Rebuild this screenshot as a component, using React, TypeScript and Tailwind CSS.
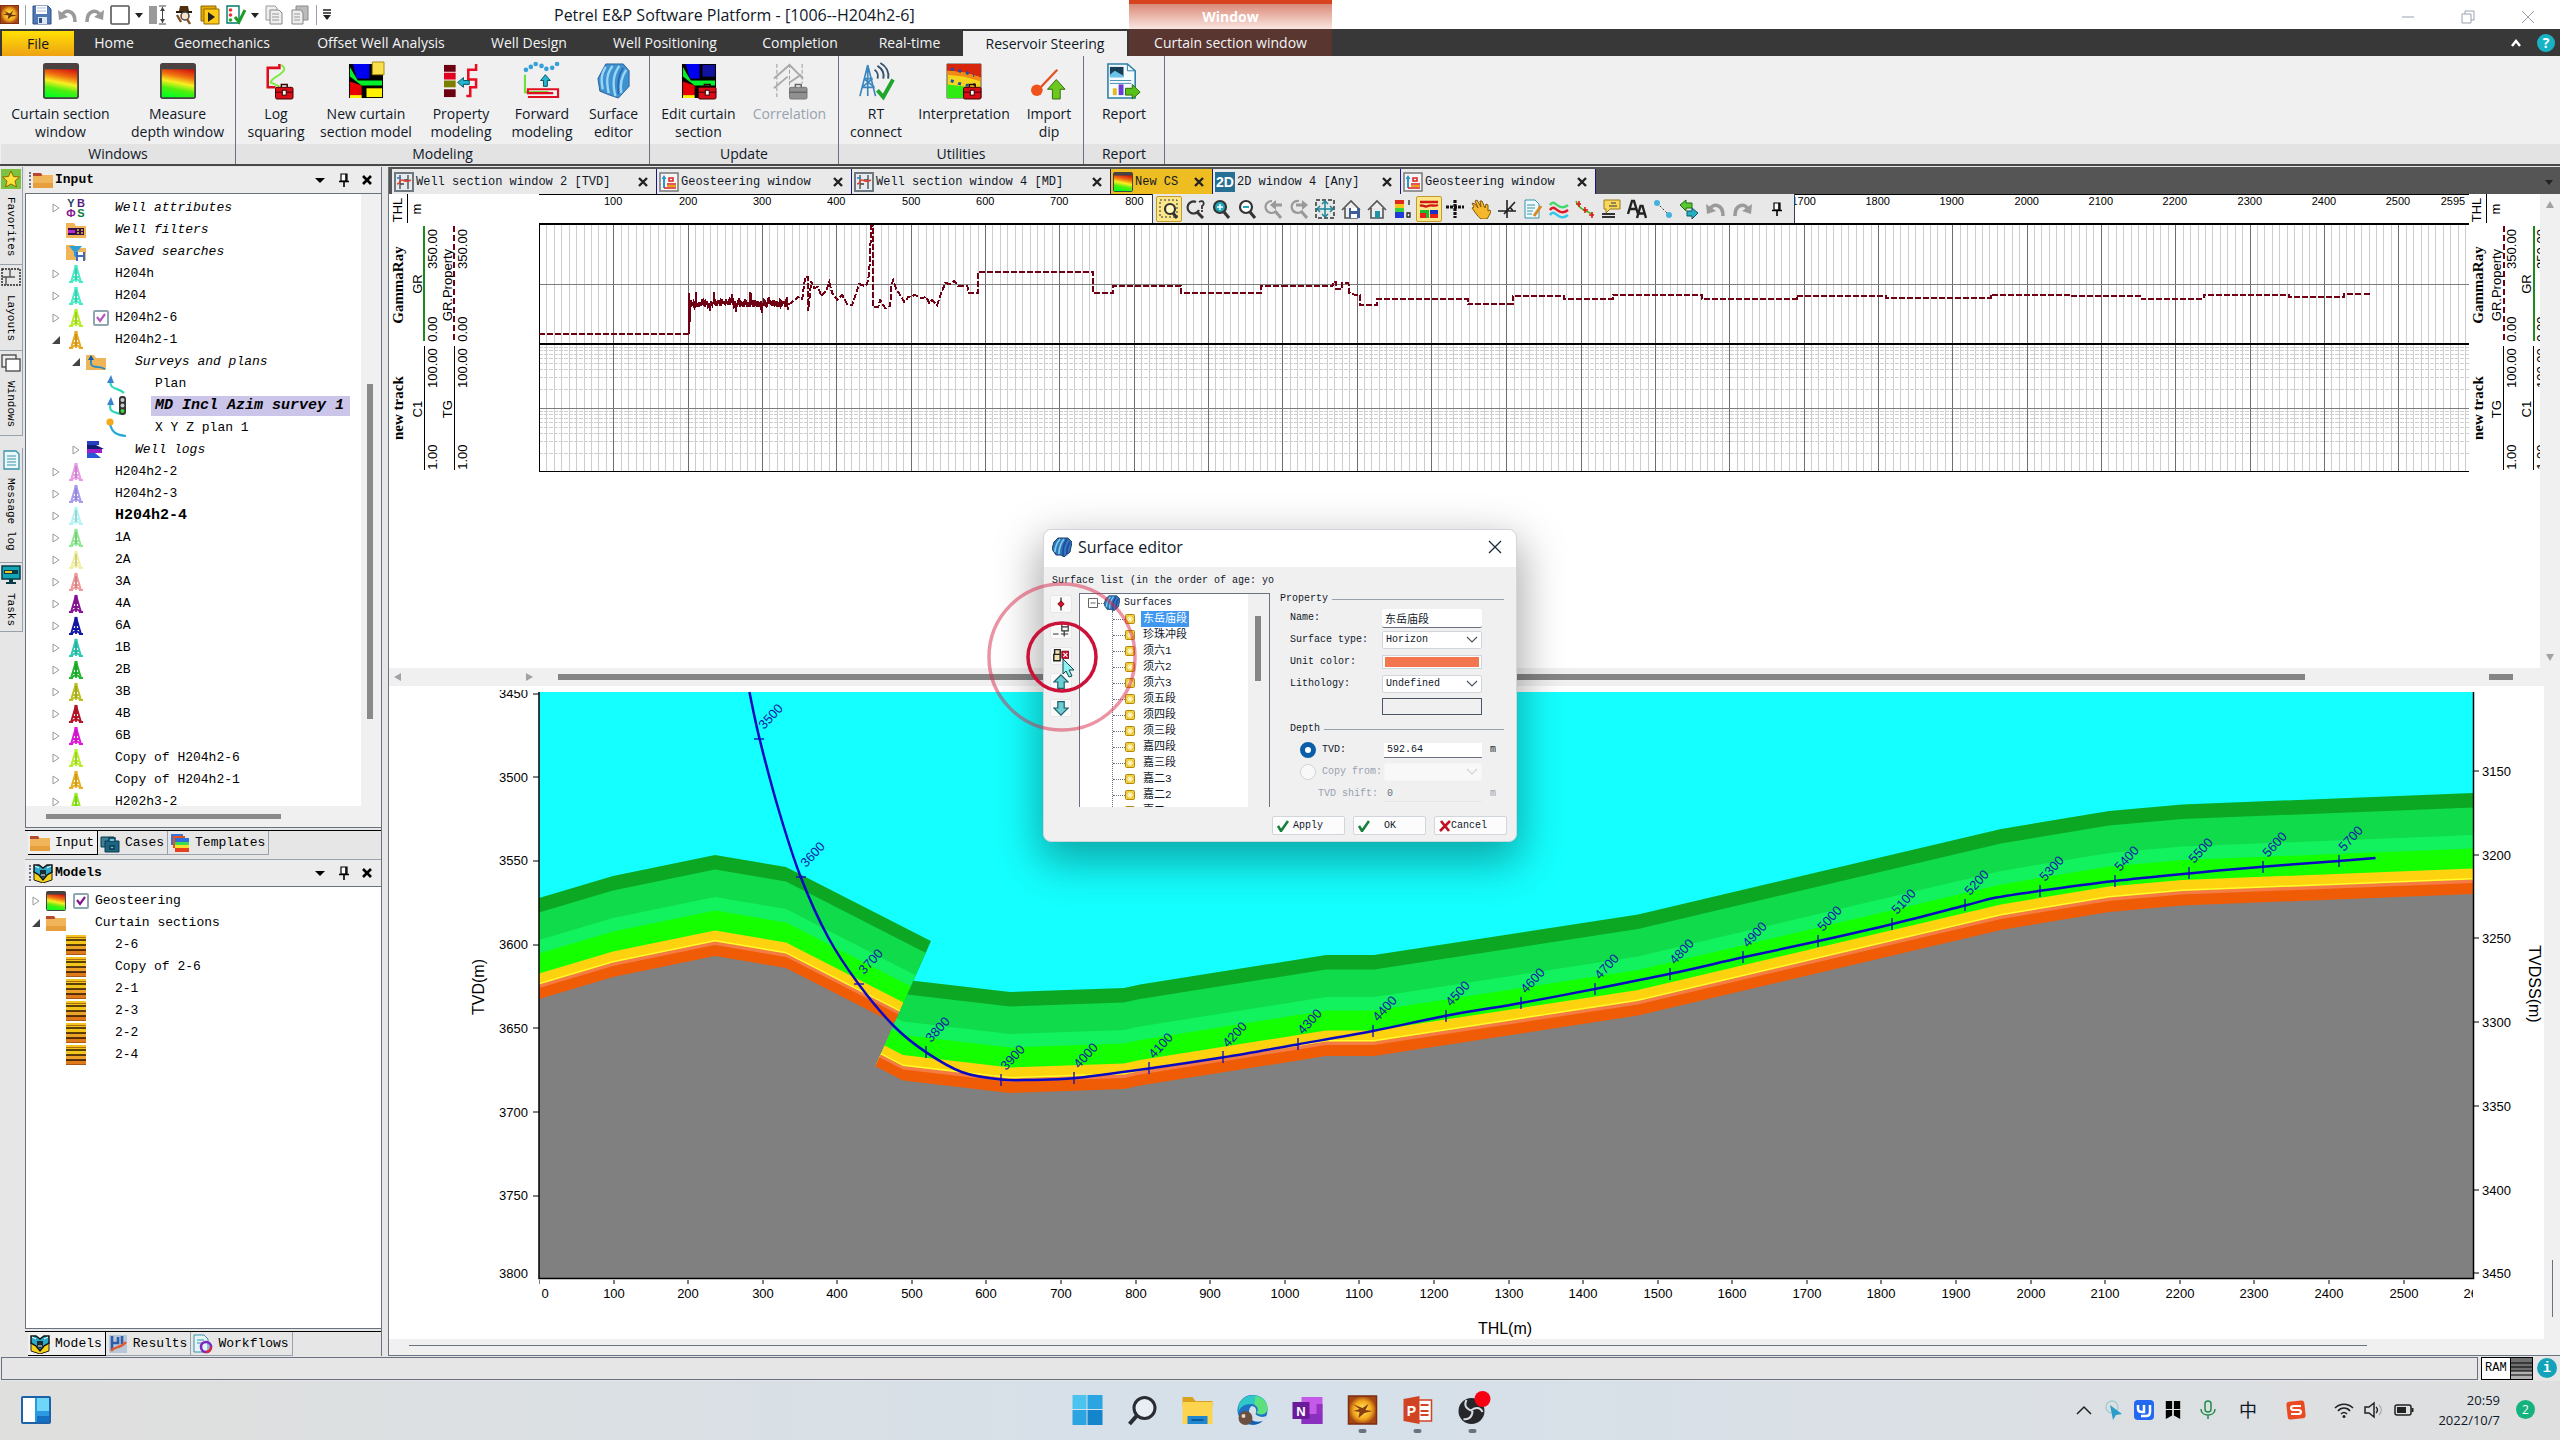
import type { ReactNode } from "react";

const MONO = "font-['Liberation_Mono','Noto_Sans_CJK_SC',monospace]";
const UI = "font-['Open_Sans','Noto_Sans_CJK_SC',sans-serif]";

type IconProps = { className?: string; children?: ReactNode; box?: string };

function Svg({ className = "size-5", box = "0 0 20 20", children }: IconProps) {
    return (
        <svg viewBox={box} className={`shrink-0 ${className}`} fill="none" aria-hidden="true">
            {children}
        </svg>
    );
}

/* ---------- shared icons ---------- */

function Undo({ flip = false, className = "size-5" }: { flip?: boolean; className?: string }) {
    return (
        <Svg className={className}>
            <g transform={flip ? "translate(20 0) scale(-1 1)" : undefined}>
                <path d="M4 11C6 4 17 4 17 17" stroke="#9a9a9a" strokeWidth="3.6" />
                <path d="M0 5l1 10 9-3z" fill="#9a9a9a" />
            </g>
        </Svg>
    );
}

function Folder({ className = "size-5" }: { className?: string }) {
    return (
        <Svg className={className}>
            <path d="M0 3h8l2 3h10v4H0z" fill="#b8472f" />
            <path d="M0 6h8l2-1h10v13H0z" fill="#f0b559" />
            <path d="M0 13h20v5H0z" fill="#e79f3e" />
        </Svg>
    );
}

function Heat({ className = "size-5", id }: { className?: string; id: string }) {
    return (
        <Svg className={className}>
            <defs>
                <linearGradient id={id} x1="0.6" y1="0" x2="0.4" y2="1">
                    <stop offset="0.1" stopColor="#d01010" />
                    <stop offset="0.35" stopColor="#f07010" />
                    <stop offset="0.55" stopColor="#f8f020" />
                    <stop offset="0.75" stopColor="#50ee10" />
                    <stop offset="1" stopColor="#00ff20" />
                </linearGradient>
            </defs>
            <rect x="0.5" y="0.5" width="19" height="19" rx="1" fill={`url(#${id})`} stroke="#444" />
            <path d="M1 1h18v2.5H1z" fill="#444" />
        </Svg>
    );
}

function Toolbox() {
    return (
        <g>
            <path d="M24 25v-3h6v3" stroke="#300" strokeWidth="1.5" />
            <rect x="18" y="25" width="18" height="12" rx="1.5" fill="#d80d17" stroke="#400" />
            <path d="M18 30h18" stroke="#400" />
            <rect x="25" y="28" width="4" height="5" fill="#fff" stroke="#300" />
        </g>
    );
}

function Gem({ className = "size-5" }: { className?: string }) {
    return (
        <Svg className={className}>
            <path d="M6 1h10l4 4-2 10-6 5-3-2H4l-4-6 2-7z" fill="#2f78b8" stroke="#1b3f6e" />
            <path d="M8 2C4 7 3 10 3 15M12 2c-4 5-5 9-5 15" stroke="#7fcdf0" strokeWidth="1.6" />
            <path d="M15 2c-4 6-4 10-4 17M18 5c-3 4-3 7-3 12" stroke="#2445a0" strokeWidth="1.6" />
        </Svg>
    );
}

function Cube({ className = "size-5" }: { className?: string }) {
    return (
        <Svg className={className}>
            <path d="M1 8l9 4 9-4v9l-9 3-9-3z" fill="#f5d21c" stroke="#222" />
            <path d="M1 2h5l4 3 4-3h5v7l-5 3-4 5-4-5-5-3z" fill="#2aa9c9" stroke="#111" strokeWidth="1.4" />
            <path d="M7 7h6v5l-3 3-3-3z" fill="#1d2b33" />
            <path d="M2 3l4 2M18 3l-4 2M8 12h4" stroke="#fff" />
        </Svg>
    );
}

function SavedFolder() {
    return (
        <Svg>
            <path d="M0 3h8l2 3h10v12H0z" fill="#f0b559" />
            <path d="M3 4h13l-5 6v6l-3-2v-4z" fill="#2b9fd6" />
            <path d="M10 10h9v9h-9z" fill="#3d6cc0" />
            <path d="M12 10h5v3h-5zM12 15h5v4h-5z" fill="#fff" />
        </Svg>
    );
}

function Derrick({ color }: { color: string }) {
    return (
        <Svg>
            <path d="M10 1L5 18M10 1l5 17M10 1v17M7 9h6M6 13h8M3 18h4M13 18h4M6.5 12l7 5M13.5 12l-7 5" stroke={color} strokeWidth="1.8" />
            <path d="M8.5 1h3v4h-3z" fill={color} />
            <path d="M10 4v12" stroke="#333" strokeWidth="0.6" opacity="0.6" />
        </Svg>
    );
}

function Layers() {
    return (
        <Svg>
            <rect width="20" height="20" fill="#f3c41c" />
            <path d="M0 10h20v5H0z" fill="#efa22a" />
            <path d="M0 15h20v5H0z" fill="#df7a1c" />
            <path d="M0 5h20M0 10h20M0 15h20" stroke="#2a1500" strokeWidth="1.4" />
            <path d="M0 2.500h20M0 19.500h20" stroke="#8d4b10" strokeWidth="0.7" />
        </Svg>
    );
}

function PetrelLogo({ className = "size-5" }: { className?: string }) {
    return (
        <Svg className={className}>
            <defs>
                <radialGradient id="petrel">
                    <stop offset="0" stopColor="#fff060" />
                    <stop offset="0.65" stopColor="#f2a61c" />
                    <stop offset="1" stopColor="#a54712" />
                </radialGradient>
            </defs>
            <rect x="0.5" y="0.5" width="19" height="19" fill="url(#petrel)" stroke="#7d2c10" />
            <path d="M4 6l6 3 4-3-2 4 6 1-6 1-4 3 1-4-6-1 4-1z" fill="#6d3208" />
        </Svg>
    );
}

function WellSection() {
    return (
        <Svg>
            <rect x="1" y="1" width="18" height="18" fill="#e6ebef" stroke="#6e7880" strokeWidth="2" />
            <path d="M6 3v14M14 3v14M6 12h4M10 8h4" stroke="#444" strokeWidth="1.3" />
            <path d="M3 12c4 0 2-4 5-4s3 3 9 0" stroke="#e04030" strokeWidth="1.6" />
            <path d="M3 6h4" stroke="#3a7ac8" strokeWidth="1.6" />
        </Svg>
    );
}

function Geosteer() {
    return (
        <Svg>
            <rect x="1" y="1" width="18" height="18" fill="#f6f6f6" stroke="#777" strokeWidth="1.5" />
            <path d="M5 16V5" stroke="#2b94cf" strokeWidth="2" />
            <path d="M2.500 7L5 3l2.500 4z" fill="#2b94cf" />
            <path d="M10 6h4v3h-4zM8 12h9M5 16h12" stroke="#d22" strokeWidth="1.5" />
            <path d="M8 14h9" stroke="#eaa21c" strokeWidth="2" />
        </Svg>
    );
}

function Dim2() {
    return (
        <span className="flex size-5 shrink-0 items-center justify-center bg-[#256f95] font-['Liberation_Sans',sans-serif] text-sm font-bold text-white">
            2D
        </span>
    );
}

function Chevron({ className = "" }: { className?: string }) {
    return (
        <Svg className={`h-2 w-3 ${className}`} box="0 0 12 8">
            <path d="M1 1l5 5 5-5" stroke="currentColor" strokeWidth="1.2" />
        </Svg>
    );
}

/* ---------- title bar ---------- */

function Divider() {
    return <span className="h-5 w-px shrink-0 bg-gray-400" />;
}

function Caret() {
    return (
        <Svg className="-mx-px h-1.5 w-2" box="0 0 8 6">
            <path d="M0 1h8L4 6z" fill="#222" />
        </Svg>
    );
}

function TitleBar() {
    return (
        <header className={`relative flex h-[29px] items-center justify-between bg-white ${UI}`}>
            <div className="flex items-center gap-1.5">
                <PetrelLogo className="size-[19px]" />
                <Divider />
                <Svg>
                    <path d="M1 1h15l3 3v15H1z" fill="#5078b4" stroke="#2f4f86" />
                    <path d="M4 1h11v8H4z" fill="#fff" />
                    <path d="M6 12h9v7H6z" fill="#dce6f2" />
                    <path d="M7 13h3v5H7z" fill="#2f4f86" />
                    <path d="M5 3h9M5 6h9" stroke="#a9bcd8" />
                </Svg>
                <Undo />
                <Undo flip />
                <Svg>
                    <rect x="1" y="1" width="18" height="18" rx="1" fill="#fff" stroke="#555" strokeWidth="1.6" />
                </Svg>
                <Caret />
                <Svg>
                    <path d="M1 1h8v18H1z" fill="#9a9a9a" />
                    <path d="M11 1h7M11 19h7M14.500 2v16" stroke="#444" />
                    <path d="M12 6l2.500-4L17 6zM12 14l2.500 4 2.500-4z" fill="#444" />
                </Svg>
                <Svg>
                    <path d="M6 1h8l1 5H5z" fill="#4f2f10" />
                    <path d="M2 6h16v2H2z" fill="#2c1b0a" />
                    <circle cx="11" cy="11" r="4" fill="#fbe6cc" stroke="#444" strokeWidth="1.5" />
                    <path d="M13 14l3 5M3 10l4 7" stroke="#7d5026" strokeWidth="2.400" />
                </Svg>
                <Svg>
                    <path d="M1 1h15v15H1z" fill="#e0a800" stroke="#8d6b00" />
                    <path d="M4 4h15v15H4z" fill="#ffca18" stroke="#8d6b00" />
                    <path d="M8 7l7 5-7 5z" fill="#222" />
                </Svg>
                <Svg>
                    <path d="M1 1h12v17H1z" fill="#fff" stroke="#00796b" strokeWidth="1.4" />
                    <circle cx="4.500" cy="5" r="1.800" fill="#e33" />
                    <circle cx="4.500" cy="10" r="1.800" fill="#e33" />
                    <circle cx="4.500" cy="15" r="1.800" fill="#2a2" />
                    <path d="M9 12l4 5 6-12" stroke="#1c9c28" strokeWidth="3" />
                </Svg>
                <Caret />
                <Svg>
                    <path d="M2 1h9l2 2v12H2z" fill="#eee" stroke="#999" />
                    <path d="M6 5h9l3 3v11H6z" fill="#eee" stroke="#888" />
                    <path d="M8 9h7M8 12h7M8 15h7" stroke="#999" />
                </Svg>
                <Svg>
                    <path d="M6 1h12v14H6z" fill="#bbb" stroke="#888" />
                    <path d="M2 5h9l2 3v11H2z" fill="#eee" stroke="#888" />
                    <path d="M4 9h6M4 12h6M4 15h6" stroke="#999" />
                </Svg>
                <Divider />
                <Svg className="h-3 w-2" box="0 0 8 12">
                    <path d="M0 1h8M0 4h8" stroke="#222" strokeWidth="1.400" />
                    <path d="M0 6h8l-4 5z" fill="#222" />
                </Svg>
            </div>
            <h1 className="absolute left-[554px] text-base text-gray-900">
                Petrel E&amp;P Software Platform - [1006--H204h2-6]
            </h1>
            <div className="absolute left-[1129px] top-0 flex h-[29px] w-[203px] items-center justify-center border-t-4 border-[#d8431f] bg-linear-to-b from-[#d98a78] to-[#f8e6e2] text-sm font-bold text-white">
                Window
            </div>
            <div className="flex items-center gap-11 pr-6 pt-1 text-gray-400">
                <button type="button" aria-label="Minimize" className="size-4">
                    <Svg className="size-4" box="0 0 16 16"><path d="M2 8h12" stroke="currentColor" /></Svg>
                </button>
                <button type="button" aria-label="Restore" className="size-4">
                    <Svg className="size-4" box="0 0 16 16">
                        <path d="M2 5h9v9H2zM5 5V2h9v9h-3" stroke="currentColor" />
                    </Svg>
                </button>
                <button type="button" aria-label="Close" className="size-4">
                    <Svg className="size-4" box="0 0 16 16"><path d="M2 2l12 12M14 2L2 14" stroke="currentColor" /></Svg>
                </button>
            </div>
        </header>
    );
}

/* ---------- ribbon ---------- */

const menuTabs = [
    { label: "Home", width: "w-20" },
    { label: "Geomechanics", width: "w-[136px]" },
    { label: "Offset Well Analysis", width: "w-[182px]" },
    { label: "Well Design", width: "w-[114px]" },
    { label: "Well Positioning", width: "w-[158px]" },
    { label: "Completion", width: "w-[112px]" },
    { label: "Real-time", width: "w-[107px]" },
];

function MenuTabs() {
    return (
        <nav className={`flex h-[27px] items-stretch bg-[#383838] text-sm text-gray-100 ${UI}`}>
            <button type="button" className="ml-0.5 mt-0.5 w-[72px] bg-linear-to-b from-[#ffe000] to-[#eda212] text-gray-900">
                File
            </button>
            {menuTabs.map((t) => (
                <button key={t.label} type="button" className={`whitespace-nowrap ${t.width}`}>
                    {t.label}
                </button>
            ))}
            <button type="button" className="mt-0.5 w-[164px] whitespace-nowrap bg-[#f0f0f0] text-gray-900">
                Reservoir Steering
            </button>
            <button type="button" className="ml-0.5 w-[203px] whitespace-nowrap bg-[#593630]">
                Curtain section window
            </button>
            <div className="ml-auto flex items-center gap-4 pr-[5px]">
                <Svg className="h-2 w-2.5" box="0 0 10 8">
                    <path d="M1 7l4-5 4 5" stroke="#fff" strokeWidth="2.500" />
                </Svg>
                <span className="flex size-[18px] items-center justify-center rounded-full bg-[#17b3c4] text-sm font-bold text-white">?</span>
            </div>
        </nav>
    );
}

const ribbonIcons: Record<string, ReactNode> = {
    log: (
        <>
            <path d="M24 2c6 4 2 7-2 10s-8 4-9 8l9 4" stroke="#7bec3c" strokeWidth="2" />
            <path d="M22 1v4H10v20h8" stroke="#dc0d1c" strokeWidth="2.600" />
            <Toolbox />
        </>
    ),
    model: (
        <>
            <path d="M1 1h35v35H1z" fill="#000" />
            <path d="M5 1h17v15H9z" fill="#0000f0" />
            <path d="M2 19l12 4v12H2z" fill="#e80000" />
            <path d="M2 4l8 14h25v5H14L2 14z" fill="#00f02c" />
            <path d="M19 26h16v9H19z" fill="#fff200" />
            <path d="M2 33h12v3H2z" fill="#fff200" />
            <path d="M25-1h12v13H25z" fill="#f8e04a" stroke="#a88a10" />
        </>
    ),
    property: (
        <>
            <path d="M1 2h12v7H1z" fill="#6d0010" />
            <path d="M1 10h12v7H1z" fill="#e0001f" />
            <path d="M1 18h12v7H1z" fill="#7d7d00" />
            <path d="M1 27h12v8H1z" fill="#6d0010" />
            <path d="M34 1v6h-8v10h8v8h-6v9h-4" stroke="#e80d20" strokeWidth="2.600" />
            <path d="M15 20l6-5v3h6v4h-6v3z" fill="#21b6cf" stroke="#0b5361" />
        </>
    ),
    forward: (
        <>
            {[2, 7, 12, 18, 23, 29, 34].map((x, i) => (
                <circle key={x} cx={x} cy={[7, 4, 1, 3, 6, 5, 1][i]} r="2.400" fill="#38a0d8" />
            ))}
            <path d="M1 12v18h24" stroke="#6ee23c" strokeWidth="2.200" />
            <path d="M4 35h31v-8H4v4h26" stroke="#e01020" strokeWidth="2.200" />
            <path d="M22 12l5 6h-3v6h-4v-6h-3z" fill="#21b6cf" stroke="#0b5361" />
        </>
    ),
    surface: (
        <>
            <path d="M10 1h18l6 7v16l-11 12-9-3-10-4-2-13z" fill="#3f92d0" stroke="#2c5e9c" />
            <path d="M10 4c-5 8-5 14-3 23M17 3c-7 9-6 17-4 28M24 3c-7 9-7 20-4 31M31 7c-6 9-6 18-5 24" stroke="#9ad7f7" strokeWidth="2.400" />
            <path d="M28 5c-6 8-6 18-5 27" stroke="#2a62a8" strokeWidth="1.500" />
        </>
    ),
    edit: (
        <>
            <path d="M1 1h35v35H1z" fill="#000" />
            <path d="M5 1h14v15H9z" fill="#0000f0" />
            <path d="M22 2h13v12H22z" fill="#1212a0" />
            <path d="M2 19l12 4v10H2z" fill="#e80000" />
            <path d="M2 4l8 14h25v5H14L2 14z" fill="#00f02c" />
            <path d="M2 33h12v3H2z" fill="#fff200" />
            <Toolbox />
        </>
    ),
    correlation: (
        <>
            <path d="M5 1v34M18 1v34M31 1v20" stroke="#999" strokeDasharray="4 2" />
            <path d="M2 16L18 2l14 14M2 26l14-12M18 20l12-8" stroke="#aaa" strokeWidth="2" />
            <rect x="18" y="25" width="18" height="12" rx="1.500" fill="#909090" stroke="#777" />
            <path d="M24 25v-3h6v3M18 30h18" stroke="#666" strokeWidth="1.500" />
        </>
    ),
    rt: (
        <>
            <path d="M10 2L2 34M10 2l8 32M10 2v32M6 16h9M4 25h13M6 16l11 9M15 16L4 25" stroke="#3a86c0" strokeWidth="1.700" />
            <path d="M17 7c3 2 4 6 3 9M20 3c5 3 7 8 6 13M23 0c7 4 9 10 8 16" stroke="#36536e" strokeWidth="2" />
            <path d="M20 28l6 7 10-18" stroke="#1ea72a" strokeWidth="4" />
        </>
    ),
    interp: (
        <>
            <path d="M1 1h35v35H1z" fill="#f2d51c" stroke="#555" />
            <path d="M1 1h35v14L20 10 1 8z" fill="#d8260d" />
            <path d="M1 8l19 2 16 5v4L18 14 1 12z" fill="#f08a14" />
            <path d="M1 22l16 2 19 4v8H1z" fill="#30ea14" />
            <path d="M5 6l8 2 8 2 8 3M5 18l8 3 8 2 9-1" stroke="#1c4fa8" strokeWidth="3" strokeDasharray="3 5" />
            <Toolbox />
        </>
    ),
    dip: (
        <>
            <path d="M27 7L8 27" stroke="#e05226" strokeWidth="2.400" />
            <circle cx="6" cy="28" r="6" fill="#f0521c" />
            <path d="M26 17l9 10h-5v10h-8V27h-5z" fill="#6cc71e" stroke="#346d0a" />
        </>
    ),
    report: (
        <>
            <path d="M2 1h20l8 7v28H2z" fill="#f4fbff" stroke="#2b7ea8" strokeWidth="1.600" />
            <path d="M22 1v7h8" stroke="#2b7ea8" />
            <path d="M4 4h14v10H4z" fill="#163e56" />
            <path d="M4 12l5-4 9 5v2H4z" fill="#6cc3ea" />
            <path d="M4 18h22M4 21h22" stroke="#4d90b0" />
            <path d="M7 26h4v7H7z" fill="#e8b820" />
            <path d="M13 22h5v11h-5z" fill="#6a3ad2" />
            <path d="M20 26h7v-4l8 8-8 7v-4h-7z" fill="#58c11a" stroke="#2d6d08" />
        </>
    ),
};

const ribbonGroups = [
    {
        title: "Windows",
        items: [
            { icon: "heat1", lines: ["Curtain section", "window"], width: "w-[119px]" },
            { icon: "heat2", lines: ["Measure", "depth window"], width: "w-[115px]" },
        ],
    },
    {
        title: "Modeling",
        items: [
            { icon: "log", lines: ["Log", "squaring"], width: "w-20" },
            { icon: "model", lines: ["New curtain", "section model"], width: "w-[100px]" },
            { icon: "property", lines: ["Property", "modeling"], width: "w-[90px]" },
            { icon: "forward", lines: ["Forward", "modeling"], width: "w-[72px]" },
            { icon: "surface", lines: ["Surface", "editor"], width: "w-[71px]" },
        ],
    },
    {
        title: "Update",
        items: [
            { icon: "edit", lines: ["Edit curtain", "section"], width: "w-[97px]" },
            { icon: "correlation", lines: ["Correlation"], width: "w-[85px]", off: true },
        ],
        pad: "pr-1.5",
    },
    {
        title: "Utilities",
        items: [
            { icon: "rt", lines: ["RT", "connect"], width: "w-[74px]" },
            { icon: "interp", lines: ["Interpretation"], width: "w-[102px]" },
            { icon: "dip", lines: ["Import", "dip"], width: "w-[68px]" },
        ],
    },
    {
        title: "Report",
        items: [{ icon: "report", lines: ["Report"], width: "w-20" }],
    },
];

function Ribbon() {
    return (
        <section className={`flex h-[110px] border-b-2 border-[#484848] bg-[#f0f0f0] pl-px text-sm text-gray-900 ${UI}`}>
            {ribbonGroups.map((g) => (
                <div key={g.title} className="flex flex-col border-r border-gray-500">
                    <div className={`flex h-[88px] pt-[5px] ${g.pad ?? ""}`}>
                        {g.items.map((b) => (
                            <button
                                key={b.icon}
                                type="button"
                                disabled={"off" in b}
                                className={`flex flex-col items-center whitespace-nowrap leading-[18px] disabled:text-gray-400 ${b.width}`}
                            >
                                {b.icon.startsWith("heat") ? (
                                    <Heat id={b.icon} className="mb-1.5 mt-0.5 size-9" />
                                ) : (
                                    <Svg className="mb-1.5 mt-0.5 size-9 overflow-visible" box="0 0 37 37">{ribbonIcons[b.icon]}</Svg>
                                )}
                                {b.lines.map((l) => (
                                    <span key={l}>{l}</span>
                                ))}
                            </button>
                        ))}
                    </div>
                    <div className="flex h-5 items-center justify-center bg-[#e3e3e3]">{g.title}</div>
                </div>
            ))}
            <div className="mt-[88px] flex-1 bg-[#e3e3e3]" />
        </section>
    );
}

/* ---------- left side ---------- */

const sideTabs = [
    { label: "Favorites", h: "h-[98px]" },
    { label: "Layouts", h: "h-[86px]" },
    { label: "Windows", h: "h-[85px]" },
    { label: "Message log", h: "mt-3 h-[115px]" },
    { label: "Tasks", h: "h-[69px]" },
];

const sideIcons: Record<string, ReactNode> = {
    Favorites: (
        <>
            <rect x="0" y="0" width="20" height="20" fill="#7ec242" />
            <path d="M10 2l2.500 5.500 6 .5-4.500 4 1.500 6L10 15l-5.500 3L6 12 1.500 8l6-.5z" fill="#ffe23c" stroke="#8d6a00" />
        </>
    ),
    Layouts: (
        <>
            <path d="M1 2h18v16H1z" stroke="#222" strokeWidth="1.400" strokeDasharray="2 1" />
            <path d="M1 10h13M9 2v8M5 10v8" stroke="#555" strokeWidth="1.400" />
        </>
    ),
    Windows: (
        <>
            <rect x="1" y="2" width="14" height="12" fill="#eee" stroke="#444" strokeWidth="1.300" />
            <rect x="5" y="6" width="14" height="12" fill="#fff" stroke="#444" strokeWidth="1.300" />
        </>
    ),
    "Message log": (
        <>
            <path d="M3 1h12l3 3v15H3z" fill="#eaf8fb" stroke="#3a93a8" strokeWidth="1.300" />
            <path d="M6 6h9M6 9h9M6 12h9M6 15h9" stroke="#3a93a8" />
        </>
    ),
    Tasks: (
        <>
            <path d="M1 1h18v13H1z" fill="#12a5b8" stroke="#083d46" strokeWidth="1.500" />
            <path d="M3 5h14v4H3z" fill="#083d46" />
            <path d="M4 6h7v2H4z" fill="#f6c321" />
            <path d="M8 14h4v3H8zM5 17h10v2H5z" fill="#083d46" />
        </>
    ),
};

function SideStrip() {
    return (
        <nav className={`flex w-[23px] shrink-0 flex-col text-[11px] ${MONO}`}>
            {sideTabs.map((t) => (
                <button
                    key={t.label}
                    type="button"
                    className={`flex flex-col items-center gap-2 border-b border-r border-gray-400 bg-[#e6e6e6] pt-0.5 ${t.h}`}
                >
                    <Svg>{sideIcons[t.label]}</Svg>
                    <span className="[writing-mode:vertical-rl]">{t.label}</span>
                </button>
            ))}
        </nav>
    );
}

function PanelHeader({ title, icon }: { title: string; icon: ReactNode }) {
    return (
        <div className="flex h-[27px] items-center border-b border-gray-500 bg-[#ececec] pl-1 pr-2">
            <span className="mr-0.5 h-4 border-l-2 border-dotted border-gray-500" />
            {icon}
            <h2 className="ml-0.5 flex-1 text-[13px] font-bold">{title}</h2>
            <button type="button" aria-label={`${title} menu`} className="mr-3">
                <Svg className="h-1.5 w-2.5" box="0 0 10 6"><path d="M0 1h10L5 6z" fill="#000" /></Svg>
            </button>
            <button type="button" aria-label={`Pin ${title}`} className="mr-2.5">
                <Pin />
            </button>
            <button type="button" aria-label={`Close ${title}`}>
                <Svg className="size-3" box="0 0 12 12"><path d="M2 2l8 8M10 2l-8 8" stroke="#000" strokeWidth="2.600" /></Svg>
            </button>
        </div>
    );
}

function Pin() {
    return (
        <Svg className="size-3.5" box="0 0 14 14">
            <path d="M4 1h6v7H4z" fill="#fff" stroke="#000" strokeWidth="1.200" />
            <path d="M9 1v7M2 8.500h10M7 9v5" stroke="#000" strokeWidth="1.600" />
        </Svg>
    );
}

function TreeCheck({ label, color = "#86168d" }: { label: string; color?: string }) {
    return (
        <span className="relative size-4">
            <input
                type="checkbox"
                defaultChecked
                aria-label={label}
                className="block size-4 appearance-none rounded-xs border-2 border-[#8fa5b0] bg-white"
            />
            <Svg className="pointer-events-none absolute inset-0 size-4" box="0 0 16 16">
                <path d="M4 7l3 4 5-7" stroke={color} strokeWidth="2.200" />
            </Svg>
        </span>
    );
}

function Expander({ state }: { state?: "open" | "closed" }) {
    return (
        <span className="flex w-5 shrink-0 justify-center">
            {state === "closed" && (
                <Svg className="h-2.5 w-2" box="0 0 8 10"><path d="M1 1l6 4-6 4z" stroke="#999" /></Svg>
            )}
            {state === "open" && (
                <Svg className="size-2" box="0 0 8 8"><path d="M8 0v8H0z" fill="#444" /></Svg>
            )}
        </span>
    );
}

type Row = {
    label: string;
    level: number;
    state?: "open" | "closed";
    well?: string;
    icon?: ReactNode;
    check?: string;
    style?: string;
};

const pad = ["", "pl-5", "pl-10", "pl-[60px]"];

const attributesIcon = (
    <span className="grid size-5 shrink-0 grid-cols-2 content-center text-center font-['Liberation_Sans',sans-serif] text-[11px] font-bold leading-[10px]">
        <span className="text-[#23405a]">Y</span>
        <span className="text-[#5a1c80]">B</span>
        <span className="text-[#86168d]">Ф</span>
        <span className="text-[#0c7a3c]">S</span>
    </span>
);

const filtersIcon = (
    <Svg>
        <path d="M0 3h8l2 3h10v12H0z" fill="#f0b559" />
        <path d="M2 8h16v7H2z" fill="#32104a" />
        <path d="M2 10h7v3H2z" fill="#b32ad0" />
        <path d="M11 10h2M15 10h2M11 13h2M15 13h2" stroke="#f6c321" strokeWidth="1.500" />
    </Svg>
);

const inputRows: Row[] = [
    { label: "Well attributes", level: 1, state: "closed", icon: attributesIcon, style: "italic" },
    { label: "Well filters", level: 1, icon: filtersIcon, style: "italic" },
    { label: "Saved searches", level: 1, icon: <SavedFolder />, style: "italic" },
    { label: "H204h", level: 1, state: "closed", well: "#46ecc6" },
    { label: "H204", level: 1, state: "closed", well: "#46ecc6" },
    { label: "H204h2-6", level: 1, state: "closed", well: "#b6ee28", check: "#b45abf" },
    { label: "H204h2-1", level: 1, state: "open", well: "#e8a820" },
    {
        label: "Surveys and plans",
        level: 2,
        state: "open",
        style: "italic",
        icon: (
            <Svg>
                <path d="M0 3h8l2 3h10v12H0z" fill="#f0b559" />
                <path d="M5 4v8c2 5 7 1 14 5" stroke="#188cc8" strokeWidth="1.800" />
                <path d="M2 8l3-5 3 5z" fill="#0f5ca8" />
            </Svg>
        ),
    },
    {
        label: "Plan",
        level: 3,
        icon: (
            <Svg>
                <path d="M5 5c-3 12 8 8 13 14" stroke="#30d8b8" strokeWidth="2.200" />
                <path d="M1 9l4-8 3 8z" fill="#3c82d0" />
            </Svg>
        ),
    },
    {
        label: "MD Incl Azim survey 1",
        level: 3,
        style: "italic font-bold bg-[#cbc5ea] pl-1 pr-1.5 -ml-1",
        icon: (
            <Svg>
                <path d="M5 5c-3 12 2 10 9 13" stroke="#30d8b8" strokeWidth="2.200" />
                <path d="M1 9l4-8 3 8z" fill="#3c82d0" />
                <rect x="13" y="0" width="7" height="19" rx="3" fill="#333" />
                <circle cx="16.500" cy="4" r="2" fill="#ccc" />
                <circle cx="16.500" cy="9.500" r="2" fill="#ccc" />
                <circle cx="16.500" cy="15" r="2" fill="#3cd838" />
            </Svg>
        ),
    },
    {
        label: "X Y Z plan 1",
        level: 3,
        icon: (
            <Svg>
                <path d="M4 6c2 9 7 11 16 12" stroke="#28a8d8" strokeWidth="2.200" />
                <circle cx="4" cy="4" r="3.600" fill="#f5a81c" />
            </Svg>
        ),
    },
    {
        label: "Well logs",
        level: 2,
        state: "closed",
        style: "italic",
        icon: (
            <Svg>
                <path d="M1 1h12v4H1z" fill="#2440c0" />
                <path d="M1 5h9l8 4H1z" fill="#141e70" />
                <path d="M1 9h15v4H1z" fill="#a020c8" />
                <path d="M1 13h8l6 5H1z" fill="#2858d8" />
            </Svg>
        ),
    },
    { label: "H204h2-2", level: 1, state: "closed", well: "#eb9ae6" },
    { label: "H204h2-3", level: 1, state: "closed", well: "#a99cf0" },
    { label: "H204h2-4", level: 1, state: "closed", well: "#b4f4f4", style: "font-bold" },
    { label: "1A", level: 1, state: "closed", well: "#8eea90" },
    { label: "2A", level: 1, state: "closed", well: "#f2f0a0" },
    { label: "3A", level: 1, state: "closed", well: "#f0989a" },
    { label: "4A", level: 1, state: "closed", well: "#8a129a" },
    { label: "6A", level: 1, state: "closed", well: "#1216a8" },
    { label: "1B", level: 1, state: "closed", well: "#2cc8b4" },
    { label: "2B", level: 1, state: "closed", well: "#1eb82c" },
    { label: "3B", level: 1, state: "closed", well: "#bcc022" },
    { label: "4B", level: 1, state: "closed", well: "#b81226" },
    { label: "6B", level: 1, state: "closed", well: "#e016dc" },
    { label: "Copy of H204h2-6", level: 1, state: "closed", well: "#b6f02c" },
    { label: "Copy of H204h2-1", level: 1, state: "closed", well: "#e8b020" },
    { label: "H202h3-2", level: 1, state: "closed", well: "#90ee20" },
];

const modelRows: Row[] = [
    { label: "Geosteering", level: 0, state: "closed", icon: <Heat id="geo" />, check: "#86168d" },
    { label: "Curtain sections", level: 0, state: "open", icon: <Folder /> },
    ...["2-6", "Copy of 2-6", "2-1", "2-3", "2-2", "2-4"].map((label) => ({ label, level: 1, icon: <Layers /> })),
];

function Tree({ rows }: { rows: Row[] }) {
    return (
        <ul className="pt-[3px]">
            {rows.map((r) => (
                <li key={r.label} className={`flex h-[22px] items-center ${pad[r.level]}`}>
                    <Expander state={r.state} />
                    {r.well ? <Derrick color={r.well} /> : r.icon}
                    <span className="flex w-[29px] shrink-0 justify-center">
                        {r.check && <TreeCheck label={r.label} color={r.check} />}
                    </span>
                    <span className={`whitespace-pre leading-5 ${r.style?.includes("bold") ? "text-[15px]" : "text-[13px]"} ${r.style ?? ""}`}>
                        {r.label}
                    </span>
                </li>
            ))}
        </ul>
    );
}

function BottomTabs({ tabs }: { tabs: { label: string; icon: ReactNode }[] }) {
    return (
        <div className="mt-0.5 flex h-[25px] border-t border-black pl-[3px]">
            {tabs.map((t, i) => (
                <button
                    key={t.label}
                    type="button"
                    className={`flex items-center gap-[5px] border-b border-r pl-0.5 pr-[3px] text-[13px] ${i === 0 ? "border-black bg-[#f0f0f0]" : "border-gray-400"}`}
                >
                    {t.icon}
                    {t.label}
                </button>
            ))}
        </div>
    );
}

function SidePanels() {
    return (
        <aside className={`ml-0.5 flex w-[357px] shrink-0 flex-col border-r border-gray-500 text-black ${MONO}`}>
            <PanelHeader title="Input" icon={<Folder />} />
            <div className="flex h-[634px] flex-col border-b border-l border-gray-500 bg-[#f0f0f0]">
                <div className="flex h-[612px]">
                    <div className="flex-1 overflow-hidden bg-white">
                        <Tree rows={inputRows} />
                    </div>
                    <div className="w-5 pl-1.5 pt-[190px]">
                        <div className="h-[335px] w-1.5 bg-[#8a8a8a]" />
                    </div>
                </div>
                <div className="ml-5 mt-2 h-[5px] w-[235px] bg-[#8a8a8a]" />
            </div>
            <BottomTabs
                tabs={[
                    { label: "Input", icon: <Folder /> },
                    {
                        label: "Cases",
                        icon: (
                            <Svg>
                                <path d="M1 4h13v10H1z" fill="#3d8098" stroke="#0d3a4c" />
                                <path d="M5 8h14v11H5z" fill="#1c6480" stroke="#0d3a4c" />
                                <path d="M9 8V5h6v3M10 13h4v3h-4z" stroke="#0d3a4c" strokeWidth="1.500" fill="#5fc3dd" />
                            </Svg>
                        ),
                    },
                    {
                        label: "Templates",
                        icon: (
                            <Svg>
                                <path d="M1 1h12v11H1z" fill="#3a74d8" />
                                <path d="M3 3h12v12H3z" fill="#e8501c" />
                                <path d="M5 5h14v13H5z" fill="#f5e12a" />
                                <path d="M5 5h14v4H5z" fill="#2c70e0" />
                                <path d="M5 9h14v3H5z" fill="#3cdc50" />
                                <path d="M5 15h14v4H5z" fill="#e8401c" />
                            </Svg>
                        ),
                    },
                ]}
            />
            <div className="mt-1 border-t border-gray-400">
                <PanelHeader title="Models" icon={<Cube />} />
            </div>
            <div className="flex-1 border-b border-l border-gray-500 bg-white">
                <Tree rows={modelRows} />
            </div>
            <BottomTabs
                tabs={[
                    { label: "Models", icon: <Cube /> },
                    {
                        label: "Results",
                        icon: (
                            <Svg>
                                <path d="M1 1h18v18H1z" fill="#b8c8d8" />
                                <path d="M4 2v14M4 9h6V3M14 2v8" stroke="#2f5ca8" strokeWidth="2.600" />
                                <path d="M3 17c4-6 8-1 15-9" stroke="#e05a30" strokeWidth="2.400" />
                            </Svg>
                        ),
                    },
                    {
                        label: "Workflows",
                        icon: (
                            <Svg>
                                <path d="M1 1h10l4 4v13H1z" fill="#e6f4f7" stroke="#3a93a8" />
                                <path d="M4 6h7M4 9h5" stroke="#3a93a8" />
                                <circle cx="13" cy="13" r="5" stroke="#7a28c0" strokeWidth="2.600" />
                                <path d="M13 18a5 5 0 0 0 5-5" stroke="#e02838" strokeWidth="2.600" />
                            </Svg>
                        ),
                    },
                ]}
            />
        </aside>
    );
}

/* ---------- document tabs ---------- */

const docTabs = [
    { label: "Well section window 2 [TVD]", icon: <WellSection />, width: "w-[265px]" },
    { label: "Geosteering window", icon: <Geosteer />, width: "w-[195px]" },
    { label: "Well section window 4 [MD]", icon: <WellSection />, width: "w-[259px]" },
    { label: "New CS", icon: <Heat id="cs" />, width: "w-[102px]", active: true },
    { label: "2D window 4 [Any]", icon: <Dim2 />, width: "w-[188px]" },
    { label: "Geosteering window", icon: <Geosteer />, width: "w-[195px]" },
];

function DocTabs() {
    return (
        <div className={`flex h-[27px] items-stretch bg-[#555] pl-[3px] pt-0.5 text-xs text-gray-900 ${MONO}`}>
            {docTabs.map((t, i) => (
                <div
                    key={i}
                    className={`flex items-center border-r border-[#181880] pl-0.5 pr-2 ${t.width} ${t.active ? "bg-[#eebd22]" : "bg-[#e9e9e9]"}`}
                >
                    {t.icon}
                    <a href="#doc" className="ml-0.5 flex-1 whitespace-pre">{t.label}</a>
                    <button type="button" aria-label={`Close ${t.label}`}>
                        <Svg className="size-2.5" box="0 0 10 10"><path d="M1 1l8 8M9 1L1 9" stroke="#222" strokeWidth="2.400" /></Svg>
                    </button>
                </div>
            ))}
            <span className="ml-auto flex items-center pr-2"><Caret /></span>
        </div>
    );
}

/* ---------- log tracks ---------- */

const LX0 = 539;
const LX1 = 2468;
const lx = (thl: number) => LX0 + thl * 0.7433;

// Logarithmic guide lines of the second track, two decades.
const logLines = [344, 408].flatMap((y) => [9, 8, 7, 6, 5, 4, 3, 2].map((v) => y + 64 * (1 - Math.log10(v))));

// Dense part of the gamma curve right below the casing shoe.
const noise = Array.from({ length: 200 }, (_, i) => {
    const a = Math.sin(i * 12.9898) * 43758.5453;
    const r = a - Math.floor(a);
    const spike = i % 37 === 12 ? -9 : i % 53 === 40 ? 7 : 0;
    return `${690 + i * 0.49},${(303.5 + (r - 0.5) * 7 + spike).toFixed(1)}`;
}).join(" ");

const gammaHead = "539,334 689,334";
const gammaTail =
    "788,304 789,304 793,301 798,297 802,299 805,277 808,277 808,311 811,281 814,288 818,287 821,296 826,291 829,282 832,293 837,300 842,295 847,304 852,305 856,293 859,284 865,286 867,284 869,273 871,226 873,226 873,307 878,307 880,300 885,308 890,306 891,286 893,280 896,289 900,295 904,302 908,297 915,295 921,298 926,297 929,303 932,300 937,305 941,293 945,283 950,284 954,281 958,286 967,286 969,293 978,293 978,272 1093,272 1093,293 1113,293 1113,286 1181,286 1181,293 1261,293 1261,286 1332,286 1333,282 1336,282 1336,289 1342,289 1342,283 1348,283 1349,293 1355,295 1360,295 1360,305 1377,305 1377,299 1467,299 1467,304 1512,304 1512,296 1563,296 1563,299 1612,299 1612,295 1701,295 1701,299 1796,299 1796,296 1885,296 1885,298 1990,298 1990,295 2070,295 2070,296 2141,296 2141,299 2203,299 2203,295 2288,295 2288,297 2343,297 2343,294 2370,294";

function VText({ x, y, size = 13, children, bold = false }: { x: number; y: number; size?: number; children: ReactNode; bold?: boolean }) {
    return (
        <text
            transform={`translate(${x} ${y}) rotate(-90)`}
            fontSize={size}
            fontWeight={bold ? 700 : 400}
            fontFamily={bold ? "Liberation Serif, serif" : undefined}
            textAnchor="middle"
            dominantBaseline="central"
            fill="#000"
        >
            {children}
        </text>
    );
}

function TrackHeader({ x, order }: { x: number; order: [number, number] }) {
    const [gr, prop] = order;
    return (
        <g>
            <VText x={x} y={210}>THL</VText>
            <path d={`M${x + 10} 194v29`} stroke="#000" />
            <VText x={x + 19} y={209}>m</VText>
            <VText x={x + 1} y={285} size={15} bold>GammaRay</VText>
            <VText x={x + 1} y={408} size={15} bold>new track</VText>
            <VText x={x + gr} y={284}>GR</VText>
            <path d={`M${x + gr + 7} 226v115`} stroke="#1c8a1c" strokeWidth="2" />
            <VText x={x + prop} y={285}>GR.Property</VText>
            <path d={`M${x + prop + 7} 226v115`} stroke="#700014" strokeWidth="2" strokeDasharray="6 3" />
            <VText x={x + gr} y={409}>C1</VText>
            <VText x={x + prop} y={409}>TG</VText>
            {[gr, prop].map((o) => (
                <g key={o}>
                    <path d={`M${x + o + 7} 346v124`} stroke="#000" />
                    <VText x={x + o + 15} y={249}>350.00</VText>
                    <VText x={x + o + 15} y={329}>0.00</VText>
                    <VText x={x + o + 15} y={368}>100.00</VText>
                    <VText x={x + o + 15} y={457}>1.00</VText>
                </g>
            ))}
        </g>
    );
}

function LogTracks() {
    const minor = Array.from({ length: 259 }, (_, i) => i + 1);
    return (
        <svg
            viewBox="389 194 2150 474"
            className="block min-w-0 flex-1 bg-white font-['Liberation_Sans',sans-serif]"
            shapeRendering="crispEdges"
            fill="none"
        >
            <path d={`M${LX0} 194.500H${LX1}`} stroke="#000" />
            <path d={minor.map((i) => `M${Math.round(lx(i * 10)) + 0.5} 225V471`).join("")} stroke="#cdcdcd" />
            <path d={logLines.map((y) => `M${LX0} ${Math.round(y) + 0.5}H${LX1}`).join("")} stroke="#cfcfcf" strokeDasharray="4 1" />
            <path
                d={Array.from({ length: 25 }, (_, i) => `M${Math.round(lx((i + 1) * 100)) + 0.5} 225V471`).join("")}
                stroke="#6e6e6e"
            />
            <path d={`M${LX0} 284.500H${LX1}M${LX0} 408.500H${LX1}`} stroke="#7c7c7c" />
            <path d={`M${LX0} 224H${LX1}M${LX0} 344H${LX1}`} stroke="#000" strokeWidth="2" />
            <path d={`M${LX0 + 0.5} 224V471.500H${LX1}`} stroke="#000" />
            <g stroke="#700014" strokeWidth="2">
                <polyline points={gammaHead} strokeDasharray="6 2" />
                <polyline points={`689,334 689,293 690,322 ${noise}`} />
                <polyline points={gammaTail} strokeDasharray="6 2" />
            </g>
            <g fontSize="11" textAnchor="middle" dominantBaseline="central" fill="#000">
                {Array.from({ length: 25 }, (_, i) => (i + 1) * 100).map((v) => (
                    <text key={v} x={Math.round(lx(v))} y="201">{v}</text>
                ))}
                <text x="2452" y="201">2595</text>
            </g>
            <TrackHeader x={397} order={[20, 50]} />
            <TrackHeader x={2476} order={[50, 20]} />
        </svg>
    );
}

function Magnifier({ children, color = "#333", fill = "#fff" }: { children?: ReactNode; color?: string; fill?: string }) {
    return (
        <>
            <circle cx="9" cy="8" r="6" stroke={color} strokeWidth="2.200" fill={fill} />
            <path d="M13 13l5 6" stroke={color} strokeWidth="3" />
            {children}
        </>
    );
}

const house = <path d="M1 11L10 2l9 9M4 9v10h12V9" stroke="#555" strokeWidth="1.600" fill="#eee" />;

const chartTools: { name: string; on?: boolean; icon: ReactNode }[] = [
    {
        name: "Zoom box",
        on: true,
        icon: (
            <>
                <path d="M1 1h17v17H1z" stroke="#333" strokeDasharray="2 2" />
                <circle cx="11" cy="10" r="5" stroke="#333" strokeWidth="2.200" fill="#fff8c0" />
                <path d="M14 14l4 5" stroke="#333" strokeWidth="3" />
            </>
        ),
    },
    {
        name: "Zoom query",
        icon: (
            <>
                <path d="M11 3a6 6 0 1 0 3 8" stroke="#333" strokeWidth="2.200" />
                <path d="M12 13l6 6" stroke="#333" strokeWidth="3" />
                <path d="M14 3c5-3 6 3 3 4v3M17 11v2" stroke="#333" strokeWidth="1.800" />
            </>
        ),
    },
    { name: "Zoom in", icon: <Magnifier fill="#1fa9bb"><path d="M6 8h6M9 5v6" stroke="#fff" strokeWidth="1.500" /></Magnifier> },
    { name: "Zoom out", icon: <Magnifier><path d="M6 8h6" stroke="#1fa9bb" strokeWidth="2" /></Magnifier> },
    {
        name: "Previous view",
        icon: (
            <>
                <path d="M9 2a6 6 0 1 0 4 10" stroke="#999" strokeWidth="2.200" />
                <path d="M12 12l6 7" stroke="#999" strokeWidth="3" />
                <path d="M19 6h-8" stroke="#999" strokeWidth="3" />
                <path d="M13 1L7 6l6 5z" fill="#999" />
            </>
        ),
    },
    {
        name: "Next view",
        icon: (
            <>
                <path d="M10 2a6 6 0 1 0 3 10" stroke="#999" strokeWidth="2.200" />
                <path d="M12 12l6 7" stroke="#999" strokeWidth="3" />
                <path d="M7 6h8" stroke="#999" strokeWidth="3" />
                <path d="M13 1l6 5-6 5z" fill="#999" />
            </>
        ),
    },
    {
        name: "Fit all",
        icon: (
            <>
                <path d="M1 1h18v18H1z" stroke="#333" strokeWidth="1.500" strokeDasharray="4 2" />
                <path d="M10 2v16M2 10h16" stroke="#1a8596" strokeWidth="1.500" />
                <path d="M7 5l3-3 3 3M7 15l3 3 3-3M5 7l-3 3 3 3M15 7l3 3-3 3" stroke="#1a8596" strokeWidth="1.500" />
            </>
        ),
    },
    { name: "Save home", icon: <>{house}<path d="M8 9h11v10H8z" fill="#3f5f98" /><path d="M10 9h6v3h-6zM10 15h6v4h-6z" fill="#fff" /></> },
    { name: "Home", icon: <>{house}<path d="M8 12h5v7H8z" fill="#1f93a5" /></> },
    {
        name: "Color legend",
        icon: (
            <>
                <path d="M2 1h9v4H2z" fill="#e02818" />
                <path d="M2 5h9v4H2z" fill="#f3c51c" />
                <path d="M2 9h9v4H2z" fill="#38d03c" />
                <path d="M2 13h9v6H2z" fill="#2038d8" />
                <path d="M16 1v5M14 14h3v4h-3z" stroke="#222" strokeWidth="1.300" />
            </>
        ),
    },
    {
        name: "Overlay",
        on: true,
        icon: (
            <>
                <path d="M1 3h18M1 7c3-2 4 2 8 0s5 1 10-1" stroke="#d01818" strokeWidth="2.400" />
                <path d="M1 11h9v8H1z" fill="#20b830" />
                <path d="M1 14h6v5H1z" fill="#e8201c" />
                <path d="M11 11h8v4h-8z" fill="#1830c8" />
                <path d="M11 15h8v4h-8z" fill="#e8201c" />
            </>
        ),
    },
    { name: "Crosshair", icon: <path d="M10 1v18M1 8h18" stroke="#111" strokeWidth="3.200" strokeDasharray="3 1" /> },
    {
        name: "Pan",
        icon: <path d="M1 4l3 1 3 4-3-7 2-1 4 7-1-6 2 0 3 7 1-4 2 1 0 6 2-1 1 2-4 7h-6C6 17 4 13 1 9l2-1z" fill="#f5b72c" stroke="#86560a" />,
    },
    { name: "Measure", icon: <path d="M10 1v18M1 12h18M7 15L18 3M13 8l3 4" stroke="#222" strokeWidth="1.600" /> },
    {
        name: "Notes",
        icon: (
            <>
                <path d="M2 1h10l4 4v14H2z" fill="#eef9fb" stroke="#3a93a8" />
                <path d="M4 6h8M4 9h8M4 12h6M4 15h5" stroke="#3a93a8" />
                <path d="M18 7l-7 10" stroke="#d88820" strokeWidth="3" />
            </>
        ),
    },
    {
        name: "Horizons",
        icon: (
            <>
                <path d="M1 6c5-8 8 8 18 0" stroke="#48d870" strokeWidth="2.400" />
                <path d="M1 11c5-8 8 8 18 0" stroke="#e01828" strokeWidth="2.400" />
                <path d="M1 16c5-8 8 8 18 0" stroke="#30c8e8" strokeWidth="2.400" />
            </>
        ),
    },
    {
        name: "Control points",
        icon: (
            <>
                <path d="M1 2c4 10 9 8 17 14" stroke="#40b818" strokeWidth="1.600" />
                <path d="M1 5h5M4 2v6M8 11h5M10 8v6M14 16h5M17 13v6" stroke="#e01818" strokeWidth="1.600" />
            </>
        ),
    },
    {
        name: "Annotate",
        icon: (
            <>
                <path d="M3 1h16v9H9l-4 4v-4H3z" fill="#f8d85a" stroke="#997a14" />
                <path d="M8 7h8M10 4h5" stroke="#333" />
                <path d="M1 15h13M1 18h13" stroke="#333" strokeWidth="1.800" />
            </>
        ),
    },
    { name: "Font size", icon: <path d="M1 15L5 2h2l4 13M3 10h6M10 19l3.500-12h2L19 19M12 14.500h6" stroke="#222" strokeWidth="2.400" /> },
    {
        name: "Segment",
        icon: (
            <>
                <path d="M4 4l12 12" stroke="#333" strokeDasharray="2 2" />
                <circle cx="4" cy="4" r="3" fill="#45b4dc" />
                <circle cx="16" cy="16" r="3" fill="#45b4dc" />
            </>
        ),
    },
    {
        name: "Swap",
        icon: (
            <>
                <path d="M1 6l6-5v3h6v5H7v3z" fill="#58c832" stroke="#1f6a0c" />
                <path d="M19 14l-6-5v3H8v5h5v3z" fill="#27b0c4" stroke="#0c5666" />
            </>
        ),
    },
];

function ChartToolbar() {
    return (
        <div className="absolute left-[763px] top-0 flex h-[29px] w-[643px] items-center border-l border-r border-gray-700 bg-[#e8e8e8] pl-[3px]">
            {chartTools.map((t) => (
                <button
                    key={t.name}
                    type="button"
                    aria-label={t.name}
                    className={`flex h-[26px] w-[26px] items-center justify-center ${t.on ? "rounded-xs border border-[#c59a2c] bg-[#fbe78a]" : ""}`}
                >
                    <Svg>{t.icon}</Svg>
                </button>
            ))}
            <button type="button" aria-label="Undo" className="w-[26px] pl-1"><Undo /></button>
            <button type="button" aria-label="Redo" className="w-[26px] pl-1"><Undo flip /></button>
            <button type="button" aria-label="Pin toolbar" className="ml-4"><Pin /></button>
        </div>
    );
}

/* ---------- curtain section ---------- */

const sx = (thl: number) => 539 + thl * 0.7458;

const leftTop = [[539, 898], [613, 876], [715, 855], [786, 867], [970, 961]];
const rightTop = [[840, 947], [903, 979.5], [1010, 992], [1124, 988], [1140, 984.5], [1326, 955], [1374, 955], [1638, 914.5], [2001, 829], [2109, 811], [2182, 804.5], [2473, 793]];

// Depth below the top horizon and fill, youngest first.
const units: [number, string][] = [
    [0, "#0ca824"],
    [14.5, "#10dc4b"],
    [42, "#12f25e"],
    [55.5, "#14ff00"],
    [75.5, "#ffd210"],
    [85, "#ffff28"],
    [86.5, "#f47c44"],
    [90, "#f05c05"],
    [101, "#808080"],
];

const wellPoints: [number, number][] = [
    [749.4, 692], [759.5, 738.6], [779, 811], [800.7, 877], [828, 937], [858.9, 984.5], [894.8, 1027], [926.3, 1052.4],
    [961.7, 1072], [1001, 1079.6], [1034, 1079.9], [1074, 1078.3], [1149, 1068.5], [1223.3, 1057.3], [1297.6, 1044.4],
    [1372.8, 1031], [1446, 1015.8], [1521.3, 1002.9], [1594.7, 989], [1670, 973.8], [1743.3, 957.3], [1817.5, 941.3],
    [1891.8, 924.3], [1965, 905.5], [1996, 897.6], [2040, 890.8], [2114.6, 881], [2189, 873.4], [2263, 866.7],
    [2339, 860.9], [2375.5, 858],
];

// Smooth curve through the survey stations (Catmull-Rom).
const wellPath = wellPoints.slice(1).reduce((d, p, i) => {
    const a = wellPoints[Math.max(i - 1, 0)];
    const b = wellPoints[i];
    const c = wellPoints[Math.min(i + 2, wellPoints.length - 1)];
    const c1 = [b[0] + (p[0] - a[0]) / 6, b[1] + (p[1] - a[1]) / 6];
    const c2 = [p[0] - (c[0] - b[0]) / 6, p[1] - (c[1] - b[1]) / 6];
    return `${d}C${c1} ${c2} ${p}`;
}, `M${wellPoints[0]}`);

const mdMarks: [number, number, number][] = [
    [3500, 759, 739], [3600, 801, 877], [3700, 859, 984], [3800, 926, 1052], [3900, 1001, 1080], [4000, 1074, 1078],
    [4100, 1149, 1068], [4200, 1223, 1057], [4300, 1298, 1044], [4400, 1373, 1031], [4500, 1446, 1016], [4600, 1521, 1003],
    [4700, 1595, 989], [4800, 1670, 974], [4900, 1743, 957], [5000, 1818, 941], [5100, 1892, 924], [5200, 1965, 905],
    [5300, 2040, 891], [5400, 2115, 881], [5500, 2189, 873], [5600, 2263, 867], [5700, 2339, 861],
];

function Block({ top, clip }: { top: number[][]; clip: string }) {
    const last = top[top.length - 1];
    return (
        <g clipPath={`url(#${clip})`}>
            {units.map(([d, color]) => (
                <polygon
                    key={d}
                    fill={color}
                    points={`${top.map(([x, y]) => `${x},${y + d}`).join(" ")} ${last[0]},1278 ${top[0][0]},1278`}
                />
            ))}
        </g>
    );
}

function CurtainSection() {
    return (
        <svg viewBox="389 686 2155 653" className="block min-w-0 flex-1 bg-white font-['Liberation_Sans',sans-serif]">
            <defs>
                <clipPath id="faultLeft"><path d="M539 692H1039L931 941L875 1067H539z" /></clipPath>
                <clipPath id="faultRight"><path d="M1039 692L931 941L875 1067V1101H2473V692z" /></clipPath>
                <clipPath id="belowBar"><path d="M389 690h2155v649H389z" /></clipPath>
                <clipPath id="plotWidth"><path d="M539 1280H2473V1339H539z" /></clipPath>
            </defs>
            <path d="M539 692H2473V1278H539z" fill="#14ffff" />
            <path d="M539 1020H900V1100H2473V1278H539z" fill="#808080" />
            <Block top={leftTop} clip="faultLeft" />
            <Block top={rightTop} clip="faultRight" />
            <path d={wellPath} fill="none" stroke="#0a0ac0" strokeWidth="2.500" />
            {mdMarks.map(([md, x, y]) => (
                <g key={md} fill="#0a1aa8">
                    <path d={md < 3800 ? `M${x - 5} ${y}h10` : `M${x} ${y - 6}v12`} stroke="#0a0ac0" strokeWidth="1.300" />
                    <text transform={`translate(${x + 5} ${y - 9}) rotate(-47)`} fontSize="13">{md}</text>
                </g>
            ))}
            <g fontSize="13" dominantBaseline="central" clipPath="url(#belowBar)">
                <path d="M539 692V1278.500H2473.500V692" fill="none" stroke="#000" strokeWidth="1.500" />
                {Array.from({ length: 7 }, (_, i) => (
                    <path key={i} d={`M533 ${Math.round(693.5 + i * 83.7)}h6`} stroke="#000" />
                ))}
                {Array.from({ length: 8 }, (_, i) => (
                    <text key={i} x="528" y={Math.min(693.5 + i * 83.7, 1273)} textAnchor="end">{3450 + i * 50}</text>
                ))}
                {Array.from({ length: 7 }, (_, i) => {
                    const y = Math.round(771 + i * 83.7);
                    return (
                        <g key={i}>
                            <path d={`M2473 ${y}h6`} stroke="#000" />
                            <text x="2482" y={y}>{3150 + i * 50}</text>
                        </g>
                    );
                })}
                <g clipPath="url(#plotWidth)" textAnchor="middle">
                    {Array.from({ length: 27 }, (_, i) => (
                        <g key={i}>
                            <path d={`M${Math.round(sx(i * 100))} 1280v4`} stroke="#000" />
                            <text x={i === 0 ? 545 : Math.round(sx(i * 100))} y="1293">{i * 100}</text>
                        </g>
                    ))}
                </g>
                <text x="1505" y="1328" fontSize="16" textAnchor="middle">THL(m)</text>
                <VText x={478} y={987} size={16}>TVD(m)</VText>
                <text transform="translate(2534 984) rotate(90)" fontSize="16" textAnchor="middle" dominantBaseline="central">TVDSS(m)</text>
            </g>
        </svg>
    );
}

function Arrow({ dir }: { dir: "left" | "right" | "up" | "down" }) {
    const d = { left: "M8 1v8L1 5z", right: "M2 1v8l7-4z", up: "M1 8h8L5 1z", down: "M1 2h8L5 9z" }[dir];
    return (
        <Svg className="size-2.5" box="0 0 10 10"><path d={d} fill="#a2a2a2" /></Svg>
    );
}

function MainArea() {
    return (
        <main className="ml-[6px] flex min-w-0 flex-1 flex-col border-l border-gray-500 bg-white">
            <DocTabs />
            <div className="relative flex">
                <LogTracks />
                <ChartToolbar />
                <div className="flex w-5 shrink-0 flex-col items-center justify-between bg-[#f0f0f0] py-1.5">
                    <Arrow dir="up" />
                    <Arrow dir="down" />
                </div>
            </div>
            <div className="flex h-[18px] items-center bg-[#f0f0f0] pl-1">
                <div className="flex w-[141px] justify-between"><Arrow dir="left" /><Arrow dir="right" /></div>
                <div className="ml-6 mr-[184px] h-1.5 flex-1 bg-[#858585]" />
                <div className="mr-[47px] h-1.5 w-6 bg-[#858585]" />
            </div>
            <div className="flex">
                <CurtainSection />
                <div className="flex w-4 shrink-0 flex-col items-center justify-end bg-[#f0f0f0] pb-[22px]">
                    <div className="h-[57px] w-px bg-gray-500" />
                </div>
            </div>
            <div className="flex flex-1 items-start border-b border-gray-500 bg-[#f0f0f0] pl-5 pr-[193px] pt-1.5">
                <div className="h-px flex-1 bg-gray-500" />
            </div>
        </main>
    );
}

/* ---------- surface editor dialog ---------- */

const surfaces = ["东岳庙段", "珍珠冲段", "须六1", "须六2", "须六3", "须五段", "须四段", "须三段", "嘉四段", "嘉三段", "嘉二3", "嘉二2", "嘉二1"];

const listTools: { name: string; icon: ReactNode }[] = [
    { name: "Insert surface", icon: <><path d="M10 2v16" stroke="#222" strokeWidth="1.500" /><path d="M10 6l4 4-4 4-4-4z" fill="#d81030" stroke="#500" /></> },
    { name: "Append surface", icon: <path d="M11 1h8v5h-8zM11 6h8v5h-8zM0 15h7M10 15h9M14 12v6" stroke="#333" strokeWidth="1.500" /> },
    { name: "Delete surface", icon: <><path d="M2 2h7v6H2zM1 8h8v8H1z" stroke="#222" strokeWidth="1.800" fill="#f2e3b0" /><path d="M11 4h9v9h-9z" fill="#c8102e" stroke="#6a0010" /><path d="M13 6l5 5M18 6l-5 5" stroke="#fff" strokeWidth="1.500" /></> },
    { name: "Move up", icon: <path d="M10 1l9 9h-5v8H6v-8H1z" fill="#6ccfd4" stroke="#1f5d68" strokeWidth="1.500" /> },
    { name: "Move down", icon: <path d="M10 19l9-9h-5V2H6v8H1z" fill="#6ccfd4" stroke="#1f5d68" strokeWidth="1.500" /> },
];

function Tick() {
    return <Svg className="size-3" box="0 0 12 12"><path d="M1 6l3 5L11 1" stroke="#14803c" strokeWidth="2.600" /></Svg>;
}

function Select({ id, value, disabled = false }: { id: string; value: string; disabled?: boolean }) {
    return (
        <div className="relative">
            <select
                id={id}
                aria-label={id}
                disabled={disabled}
                className="block h-[18px] w-full appearance-none rounded-xs border border-gray-300 bg-white pl-[3px] leading-4 disabled:border-gray-100 disabled:bg-[#f8f8f8]"
            >
                <option>{value}</option>
            </select>
            <Chevron className={`pointer-events-none absolute right-1 top-[5px] ${disabled ? "text-gray-300" : "text-gray-600"}`} />
        </div>
    );
}

function Legend({ children }: { children: ReactNode }) {
    return (
        <div className="flex items-center gap-1">
            <h3>{children}</h3>
            <span className="h-px flex-1 bg-gray-400" />
        </div>
    );
}

function SurfaceEditor() {
    return (
        <div
            role="dialog"
            aria-label="Surface editor"
            className={`absolute left-[1043px] top-[529px] flex h-[313px] w-[474px] flex-col rounded-lg border border-gray-300 bg-[#f0f0f0] text-[10px] leading-3 text-gray-900 shadow-[0_16px_44px_4px_rgba(0,0,0,0.35)] ${MONO}`}
        >
            <div className={`flex h-[37px] shrink-0 items-center rounded-t-lg bg-white pb-1 pl-2 pr-3.5 ${UI}`}>
                <Gem />
                <h2 className="ml-1.5 flex-1 text-base">Surface editor</h2>
                <button type="button" aria-label="Close" className="text-gray-800">
                    <Svg className="size-3.5" box="0 0 14 14"><path d="M1 1l12 12M13 1L1 13" stroke="currentColor" strokeWidth="1.300" /></Svg>
                </button>
            </div>
            <p className="mt-2 whitespace-pre pl-2">Surface list (in the order of age: yo</p>
            <div className="mt-1.5 flex h-[214px] pl-1.5">
                <div className="flex w-[22px] flex-col gap-2 pt-0.5">
                    {listTools.map((t) => (
                        <button
                            key={t.name}
                            type="button"
                            aria-label={t.name}
                            className="flex h-[18px] w-[22px] items-center justify-center rounded-xs border border-gray-200 bg-[#fafafa]"
                        >
                            <Svg className="size-4">{t.icon}</Svg>
                        </button>
                    ))}
                </div>
                <div className="ml-[7px] flex w-[191px] overflow-hidden border-l border-r border-t border-gray-500">
                    <div className="flex-1 overflow-hidden bg-white pt-px">
                        <div className="flex h-4 items-center pl-2">
                            <Svg className="size-2.5" box="0 0 10 10"><path d="M.5.5h9v9h-9zM2.500 5h5" stroke="#666" /></Svg>
                            <span className="w-1.5 border-t border-dotted border-gray-500" />
                            <Gem className="size-4" />
                            <span className="ml-1">Surfaces</span>
                        </div>
                        <ul className="ml-8 border-l border-dotted border-gray-500">
                            {surfaces.map((s, i) => (
                                <li key={s} className="flex h-4 items-center text-[11px]">
                                    <span className="w-3 border-t border-dotted border-gray-500" />
                                    <Svg className="size-2.5">
                                        <rect x="1" y="1" width="18" height="18" rx="2" fill="#f0cd3a" stroke="#b08a14" strokeWidth="2" />
                                        <path d="M10 4v12M4 10h12M6 6l8 8M14 6l-8 8" stroke="#fffbe0" strokeWidth="2" />
                                    </Svg>
                                    <span className={`ml-1.5 px-0.5 leading-4 ${i === 0 ? "bg-[#3f97f0] text-white" : ""}`}>{s}</span>
                                </li>
                            ))}
                        </ul>
                    </div>
                    <div className="w-[21px] bg-[#f0f0f0] pl-[7px] pt-[22px]">
                        <div className="h-[65px] w-1.5 bg-[#858585]" />
                    </div>
                </div>
                <div className="ml-2.5 w-[224px]">
                    <Legend>Property</Legend>
                    <div className="ml-2.5 mt-[3px] grid auto-rows-[20px] grid-cols-[92px_100px] items-center gap-y-0.5">
                        <label htmlFor="name">Name:</label>
                        <input id="name" defaultValue="东岳庙段" className="h-[19px] rounded-xs border-b border-gray-500 bg-white pl-[3px] text-[11px]" />
                        <label htmlFor="type">Surface type:</label>
                        <Select id="type" value="Horizon" />
                        <label htmlFor="color">Unit color:</label>
                        <button id="color" type="button" aria-label="Unit color" className="h-3.5 w-full border border-gray-300 bg-white px-0.5 py-px">
                            <span className="block h-full bg-[#f4764e]" />
                        </button>
                        <label htmlFor="litho">Lithology:</label>
                        <Select id="litho" value="Undefined" />
                        <span />
                        <div className="h-[17px] border border-gray-600" />
                    </div>
                    <div className="ml-2.5 mt-[7px]">
                        <Legend>Depth</Legend>
                    </div>
                    <div className="ml-2.5 mt-1.5 grid auto-rows-[18px] grid-cols-[94px_98px_auto] items-center gap-y-1">
                        <label className="flex items-center gap-1.5 pl-2.5">
                            <input type="radio" name="depth" defaultChecked className="size-4 appearance-none rounded-full border-[5px] border-[#0c5ea8] bg-white" />
                            TVD:
                        </label>
                        <input aria-label="TVD" defaultValue="592.64" className="h-[15px] border-b border-gray-500 bg-white pl-[3px]" />
                        <span className="text-center">m</span>
                        <label className="flex items-center gap-1.5 whitespace-pre pl-2.5 text-gray-400">
                            <input type="radio" name="depth" disabled className="size-4 shrink-0 appearance-none rounded-full border border-gray-300 bg-[#f8f8f8]" />
                            Copy from:
                        </label>
                        <Select id="copy" value="" disabled />
                        <span />
                        <label htmlFor="shift" className="pl-7 text-gray-400">TVD shift:</label>
                        <input id="shift" disabled defaultValue="0" className="h-4 border-b border-gray-200 bg-[#f0f0f0] pl-[3px] text-gray-500" />
                        <span className="text-center text-gray-400">m</span>
                    </div>
                </div>
            </div>
            <div className="mt-[9px] flex justify-end gap-2 pr-[9px]">
                {["Apply", "OK", "Cancel"].map((b) => (
                    <button key={b} type="button" className="flex h-[19px] w-[73px] items-center rounded-xs border border-gray-300 bg-[#fcfcfc] pl-1">
                        {b === "Cancel" ? (
                            <Svg className="size-3" box="0 0 12 12"><path d="M2 1l8 10M11 1L1 11" stroke="#c01024" strokeWidth="2.600" /></Svg>
                        ) : (
                            <Tick />
                        )}
                        <span className={b === "OK" ? "ml-3.5" : b === "Apply" ? "ml-1" : ""}>{b}</span>
                    </button>
                ))}
            </div>
        </div>
    );
}

function ClickHalo() {
    return (
        <svg viewBox="0 0 160 160" className="pointer-events-none absolute left-[982px] top-[577px] size-40" fill="none">
            <circle cx="80" cy="80" r="73" stroke="#d8284a" strokeOpacity="0.5" strokeWidth="3.500" />
            <circle cx="80" cy="80" r="34" stroke="#cc1238" strokeWidth="3.500" />
            <path d="M81 82v15l3-3 3 6 3-1-3-6h5z" fill="#8ef2ee" stroke="#0b4550" />
        </svg>
    );
}

/* ---------- status bar and taskbar ---------- */

function StatusBar() {
    return (
        <div className={`flex h-[25px] items-center gap-[3px] bg-[#e6e6e6] pb-px pl-px text-sm ${MONO}`}>
            <div className="h-[23px] flex-1 border border-gray-500" />
            <div className="flex h-[23px] w-[52px] items-center border border-black bg-white pl-[3px]">
                <span className="text-xs">RAM</span>
                <Svg className="ml-auto h-[21px] w-[22px]" box="0 0 22 21">
                    <path d="M0 0h22v21H0z" fill="#707070" />
                    <path d="M0 13h22v8H0z" fill="#b0b0b0" />
                    <path d="M0 5h22M0 9h22M0 13h22M0 17h22M.5 0v21" stroke="#000" />
                </Svg>
            </div>
            <span className="ml-px mr-[3px] flex size-5 items-center justify-center rounded-full bg-[#12a3ba] text-sm font-bold text-white">i</span>
        </div>
    );
}

const apps: { name: string; running?: boolean; icon: ReactNode }[] = [
    {
        name: "Start",
        icon: (
            <>
                <path d="M0 0h14v14H0z" fill="#4cc4ef" />
                <path d="M15 0h15v14H15zM0 15h14v15H0z" fill="#2ba4e2" />
                <path d="M15 15h15v15H15z" fill="#1484cc" />
            </>
        ),
    },
    { name: "Search", icon: <><circle cx="17" cy="13" r="10.500" stroke="#2a2c34" strokeWidth="3" fill="#e8eef4" /><path d="M9 21l-7 8" stroke="#2a2c34" strokeWidth="4" /></> },
    {
        name: "File Explorer",
        icon: (
            <>
                <path d="M0 2h10l3 4h17v5H0z" fill="#d9a21c" />
                <path d="M0 7h30v22H0z" fill="#fdd44e" />
                <path d="M5 21h20v8H5z" fill="#1f86d0" />
                <path d="M9 25h12" stroke="#0c5a9c" strokeWidth="2" />
            </>
        ),
    },
    {
        name: "Edge",
        icon: (
            <>
                <circle cx="15" cy="15" r="15" fill="#1c72c4" />
                <path d="M1 11C5-4 30-3 30 13c0 6-6 8-11 5 3-3 1-9-5-9C7 9 2 12 1 18z" fill="#2fc8c8" />
                <path d="M18 1c9 2 12 8 12 12 0 6-6 8-11 5 3-3 1-7-2-8z" fill="#5be07c" />
                <path d="M14 11c4 0 6 4 4 8 4 4 9 3 11 2-3 8-14 9-17 3-2-5-1-10 2-13z" fill="#d5e0ea" />
                <path d="M12 14c-3 8 3 15 13 12-6 6-18 4-17-6z" fill="#1460b0" />
                <circle cx="8" cy="23" r="7" fill="#6a5040" />
                <circle cx="6" cy="21" r="2" fill="#e8d8c8" />
            </>
        ),
    },
    {
        name: "OneNote",
        icon: (
            <>
                <path d="M9 2h21v27H9z" fill="#c65ae8" />
                <path d="M24 9h6v10h-6z" fill="#9332bf" />
                <path d="M9 19h21v10H9z" fill="#8b2fc0" />
                <path d="M0 7h17v17H0z" fill="#6a1b9a" />
                <text x="8.500" y="20.500" fontSize="13" fontWeight="700" textAnchor="middle" fill="#fff">N</text>
            </>
        ),
    },
    {
        name: "Petrel",
        running: true,
        icon: (
            <>
                <rect x="1" y="1" width="28" height="28" fill="url(#petrel)" stroke="#7d2c10" strokeWidth="1.500" />
                <path d="M5 9l10 4 6-4-3 6 7 1-8 2-6 5 1-6-6-1 6-2z" fill="#8a3d10" />
            </>
        ),
    },
    {
        name: "PowerPoint",
        running: true,
        icon: (
            <>
                <path d="M14 5h15v21H14z" fill="#fff" stroke="#d04423" strokeWidth="1.500" />
                <path d="M18 10h8M18 16h8M18 20h8" stroke="#d04423" strokeWidth="2" />
                <path d="M1 4l16-3v28L1 26z" fill="#d04423" />
                <text x="9" y="20.500" fontSize="14" fontWeight="700" textAnchor="middle" fill="#fff">P</text>
            </>
        ),
    },
    {
        name: "OBS Studio",
        running: true,
        icon: (
            <>
                <circle cx="14" cy="16" r="13" fill="#25272b" />
                <path d="M9 5c-3 6 0 9 6 11M14 15c4-3 9-3 11 2M15 16c0 6-4 9-9 8" stroke="#d8dce0" strokeWidth="2" />
                <circle cx="25" cy="4" r="8" fill="#f60012" />
            </>
        ),
    },
];

function Taskbar() {
    return (
        <footer className={`relative flex h-[59px] items-center justify-between bg-linear-to-r from-[#dfdfdd] via-[#d5e0ea] to-[#dfdfdf] pb-0.5 text-gray-900 ${UI}`}>
            <button type="button" aria-label="Widgets" className="ml-[21px]">
                <Svg className="h-7 w-[30px]" box="0 0 30 28">
                    <rect x="1" y="1" width="28" height="26" rx="1" fill="#2b9ae0" stroke="#1c62a8" strokeWidth="2" />
                    <path d="M2 2h12v24H2z" fill="#fff" />
                    <path d="M16 2h12v13H16z" fill="#6fd6f8" />
                    <path d="M16 20h12v6H16z" fill="#1470c0" />
                </Svg>
            </button>
            <div className="absolute left-1/2 flex -translate-x-1/2 items-center gap-[25px]">
                {apps.map((a) => (
                    <button key={a.name} type="button" aria-label={a.name} className="relative font-['Liberation_Sans',sans-serif]">
                        <Svg className="size-[30px] overflow-visible" box="0 0 30 30">{a.icon}</Svg>
                        {a.running && <span className="absolute -bottom-2 left-1/2 h-1 w-2 -translate-x-1/2 rounded-full bg-gray-500" />}
                    </button>
                ))}
            </div>
            <div className="flex items-center pr-[25px]">
                <Svg className="h-3 w-4" box="0 0 16 12"><path d="M1 10l7-7 7 7" stroke="#222" strokeWidth="1.500" /></Svg>
                <Svg className="ml-3 size-5">
                    <circle cx="8" cy="7" r="6" stroke="#a8cdd2" strokeWidth="1.500" />
                    <path d="M6 5l12 9-6 1-3 5z" fill="#2c9cc8" />
                </Svg>
                <Svg className="ml-2.5 size-5">
                    <rect width="20" height="20" rx="4" fill="#2268f0" />
                    <path d="M4 5v4q0 3 4 3h2V5M16 5v7q0 4-4 4H7" stroke="#fff" strokeWidth="2.500" />
                </Svg>
                <Svg className="ml-2.5 size-[18px]"><path d="M2 0h7v9H2zM11 0h7v9h-7zM2 10h7v6l-7 4zM11 10h7v10l-7-4z" fill="#000" /></Svg>
                <Svg className="ml-4 size-5">
                    <rect x="7" y="1" width="6" height="11" rx="3" stroke="#238a4c" strokeWidth="1.500" />
                    <path d="M3 9c0 8 14 8 14 0M10 15v4" stroke="#238a4c" strokeWidth="1.500" />
                </Svg>
                <span className="ml-5 w-5 text-center text-lg leading-5">中</span>
                <Svg className="ml-7 size-5">
                    <rect x="1" y="1" width="18" height="18" rx="3" fill="#ea4a22" transform="rotate(-6 10 10)" />
                    <path d="M15 6H8q-3 0-3 2t3 2h4q3 0 3 2t-3 2H5" stroke="#fff" strokeWidth="2.200" />
                </Svg>
                <Svg className="ml-7 size-5">
                    <path d="M1 8c5-5 13-5 18 0M4 11c3-4 9-4 12 0M7 14c2-2 4-2 6 0" stroke="#222" strokeWidth="1.600" />
                    <circle cx="10" cy="16.500" r="1.500" fill="#222" />
                </Svg>
                <Svg className="ml-2.5 size-5">
                    <path d="M1 7h4l5-4v14l-5-4H1z" stroke="#222" strokeWidth="1.500" />
                    <path d="M12 7c2 2 2 4 0 6" stroke="#222" strokeWidth="1.400" />
                    <path d="M15 5c3 3 3 7 0 10" stroke="#aaa" strokeWidth="1.400" />
                </Svg>
                <Svg className="ml-2.5 size-5">
                    <rect x="1" y="5" width="16" height="10" rx="2" stroke="#222" strokeWidth="1.500" />
                    <path d="M3 7h9v6H3z" fill="#222" />
                    <path d="M18.500 8v4" stroke="#222" strokeWidth="2" />
                </Svg>
                <div className="ml-4 w-[70px] whitespace-nowrap text-right text-[13px] leading-5">
                    <p>20:59</p>
                    <p>2022/10/7</p>
                </div>
                <span className="ml-4 flex size-[19px] items-center justify-center rounded-full bg-[#14b27c] text-xs text-white">2</span>
            </div>
        </footer>
    );
}

export default function App() {
    return (
        <div className="relative flex min-h-screen flex-col bg-[#e6e6e6]">
            <TitleBar />
            <MenuTabs />
            <Ribbon />
            <div className="mt-px flex flex-1">
                <SideStrip />
                <SidePanels />
                <MainArea />
            </div>
            <StatusBar />
            <Taskbar />
            <SurfaceEditor />
            <ClickHalo />
        </div>
    );
}
